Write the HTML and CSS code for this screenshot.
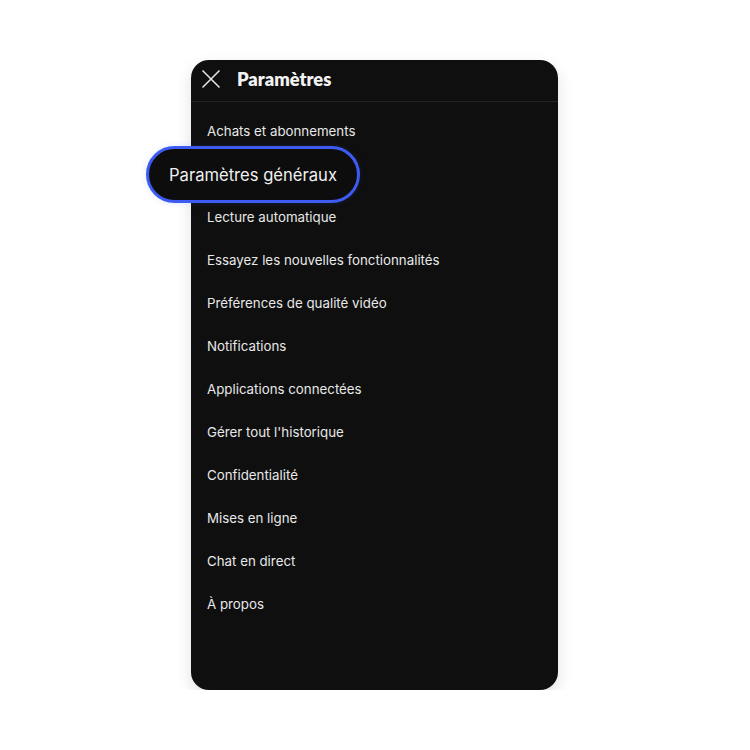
FILE: index.html
```html
<!DOCTYPE html>
<html lang="fr">
<head>
<meta charset="utf-8">
<link rel="stylesheet" href="styles.css">
</head>
<body>
<div class="panel">
  <div class="header">
    <svg class="close" width="20" height="20" viewBox="0 0 20 20"><path d="M1.5 1.5 L18.5 18.5 M18.5 1.5 L1.5 18.5" stroke="#e8e8e8" stroke-width="1.5" fill="none"/></svg>
    <span class="title">Paramètres</span>
  </div>
  <ul class="list">
    <li class="item">Achats et abonnements</li>
    <li class="item highlight"><span class="pill">Paramètres généraux</span></li>
    <li class="item">Lecture automatique</li>
    <li class="item">Essayez les nouvelles fonctionnalités</li>
    <li class="item">Préférences de qualité vidéo</li>
    <li class="item">Notifications</li>
    <li class="item">Applications connectées</li>
    <li class="item">Gérer tout l'historique</li>
    <li class="item">Confidentialité</li>
    <li class="item">Mises en ligne</li>
    <li class="item">Chat en direct</li>
    <li class="item">À propos</li>
  </ul>
</div>
</body>
</html>
```
FILE: styles.css
```css
html, body { margin: 0; padding: 0; background: #ffffff; }
body { font-family: Inter, "Liberation Sans", sans-serif; }
.panel {
  width: 367px;
  height: 630px;
  margin: 60px 0 0 191px;
  background: #0f0f0f;
  border-radius: 18px;
  box-shadow: 0 6px 16px rgba(0,0,0,0.12);
  box-sizing: border-box;
  position: relative;
}
.header {
  height: 41px;
  border-bottom: 1px solid #232323;
  display: flex;
  align-items: center;
  padding-left: 10px;
}
.close { display: block; margin-right: 16px; margin-top: -3px; }
.title {
  font-family: Lato, "Open Sans", sans-serif;
  font-weight: 800;
  font-size: 18.3px;
  color: #f2f2f2;
  margin-top: -4px;
}
.list { list-style: none; margin: 0; padding: 8px 0 0; }
.item {
  height: 43px;
  line-height: 43px;
  padding-left: 16px;
  font-size: 13.3px;
  color: #e8e8e8;
  position: relative;
}
.pill {
  position: absolute;
  left: -45px;
  top: -7px;
  width: 214px;
  height: 57px;
  box-sizing: border-box;
  border: 3px solid #3d5bf2;
  border-radius: 29px;
  background: #0d0d0d;
  color: #f0f0f0;
  font-size: 16.6px;
  line-height: 53px;
  padding-left: 20px;
  box-shadow: 0 0 6px rgba(61,91,242,0.15);
}
```
